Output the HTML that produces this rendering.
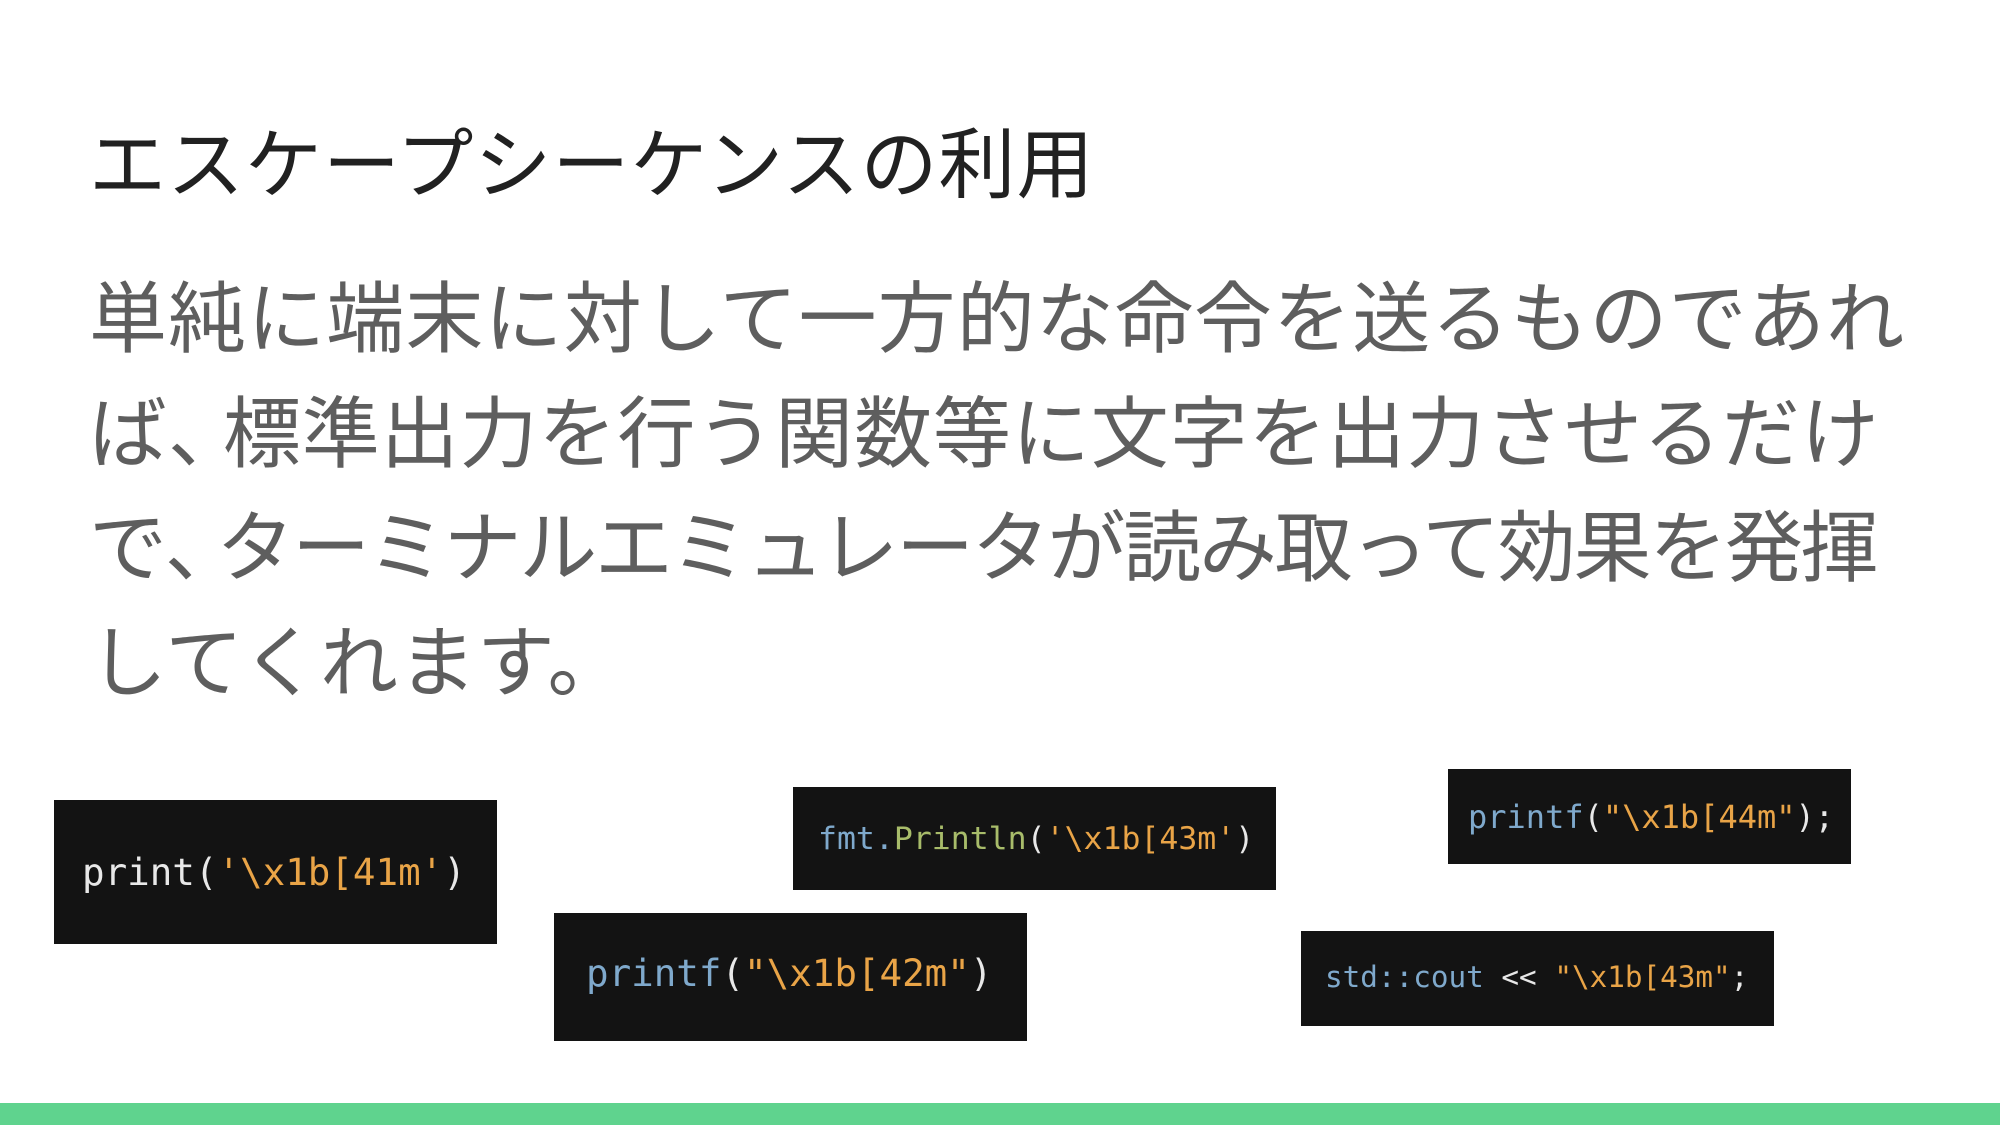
<!DOCTYPE html>
<html><head><meta charset="utf-8"><style>
html,body{margin:0;padding:0;background:#fff;width:2000px;height:1125px;overflow:hidden;position:relative}
.t{position:absolute;left:89px;top:120px;font:77px/92px "Liberation Sans","Noto Sans CJK JP",sans-serif;color:#212121;white-space:nowrap;letter-spacing:1px}
.b{position:absolute;left:89px;font:78px/100px "Liberation Sans","Noto Sans CJK JP",sans-serif;color:#5e5e5e;white-space:nowrap;letter-spacing:0.5px}
.p{display:inline-block;margin-right:-24px}
.c{position:absolute;background:#131313;font-family:"DejaVu Sans Mono","Liberation Mono",monospace;white-space:pre;color:#e8e8e8;display:flex;align-items:center;box-sizing:border-box}
.f{color:#7fa9cc}.s{color:#e9a447}.g{color:#a8bc6a}.w{color:#e8e8e8}
.bar{position:absolute;left:0;top:1103px;width:2000px;height:22px;background:#5fd38e}
</style></head><body>
<div class="t">エスケープシーケンスの利用</div>
<div class="b" style="top:269px;letter-spacing:1.1px">単純に端末に対して一方的な命令を送るものであれ</div>
<div class="b" style="top:384px;letter-spacing:0.9px">ば<span class="p">、</span>標準出力を行う関数等に文字を出力させるだけ</div>
<div class="b" style="top:498px;letter-spacing:-2.3px">で<span class="p">、</span>ターミナルエミュレータが読み取って効果を発揮</div>
<div class="b" style="top:613px">してくれます。</div>

<div class="c" style="left:54px;top:800px;width:443px;height:144px;padding-left:28px;font-size:37.5px"><span class="w">print(</span><span class="s">'\x1b[41m'</span><span class="w">)</span></div>
<div class="c" style="left:793px;top:787px;width:483px;height:103px;padding-left:25px;font-size:31.5px"><span class="f">fmt.</span><span class="g">Println</span><span class="w">(</span><span class="s">'\x1b[43m'</span><span class="w">)</span></div>
<div class="c" style="left:1448px;top:769px;width:403px;height:95px;padding-left:20px;font-size:32px"><span class="f">printf</span><span class="w">(</span><span class="s">"\x1b[44m"</span><span class="w">);</span></div>
<div class="c" style="left:554px;top:913px;width:473px;height:128px;padding-left:32px;padding-bottom:8px;font-size:37.5px"><span class="f">printf</span><span class="w">(</span><span class="s">"\x1b[42m"</span><span class="w">)</span></div>
<div class="c" style="left:1301px;top:931px;width:473px;height:95px;padding-left:24px;padding-bottom:4px;font-size:29.3px"><span class="f">std::cout</span><span class="w"> &lt;&lt; </span><span class="s">"\x1b[43m"</span><span class="w">;</span></div>
<div class="bar"></div>
</body></html>
